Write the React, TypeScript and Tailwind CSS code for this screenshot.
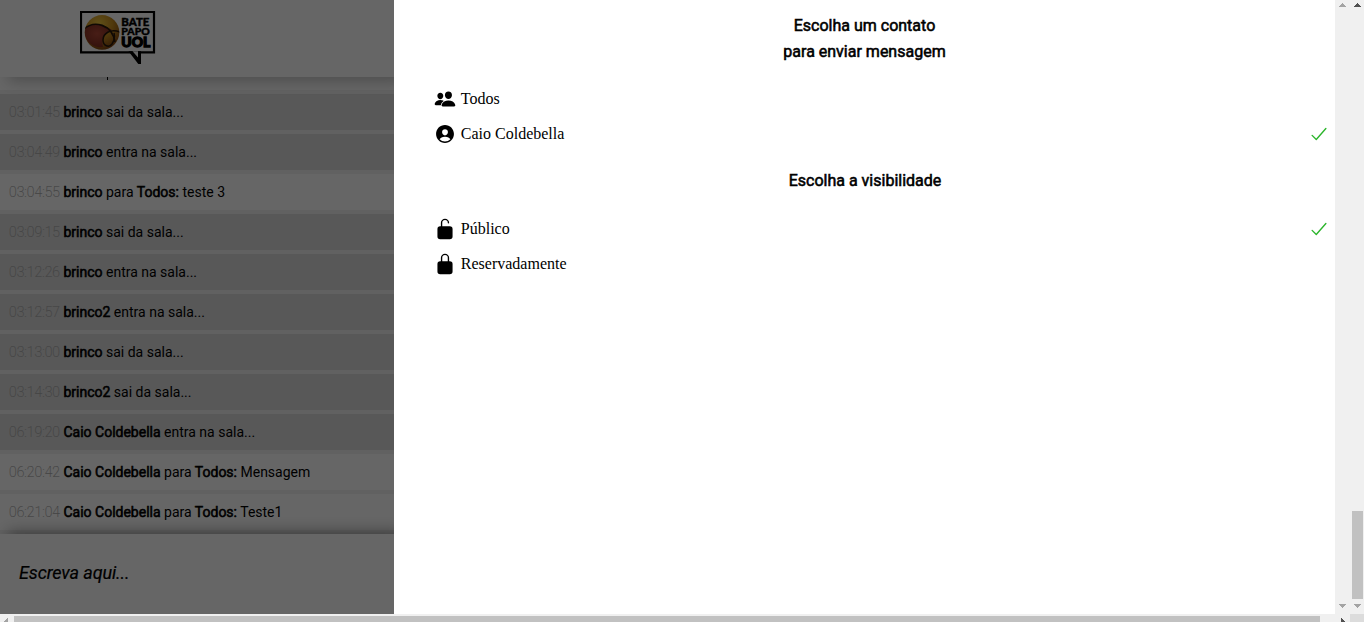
import {
  IoCheckmarkOutline,
  IoLockClosed,
  IoLockOpen,
  IoPeople,
  IoPersonCircle,
} from "react-icons/io5";
import type { ReactNode } from "react";

type Message = { time: string; from: string; to?: string; text: string };

const messages: Message[] = [
  { time: "03:01:45", from: "brinco", text: "sai da sala..." },
  { time: "03:04:49", from: "brinco", text: "entra na sala..." },
  { time: "03:04:55", from: "brinco", to: "Todos", text: "teste 3" },
  { time: "03:09:15", from: "brinco", text: "sai da sala..." },
  { time: "03:12:26", from: "brinco", text: "entra na sala..." },
  { time: "03:12:57", from: "brinco2", text: "entra na sala..." },
  { time: "03:13:00", from: "brinco", text: "sai da sala..." },
  { time: "03:14:30", from: "brinco2", text: "sai da sala..." },
  { time: "06:19:20", from: "Caio Coldebella", text: "entra na sala..." },
  { time: "06:20:42", from: "Caio Coldebella", to: "Todos", text: "Mensagem" },
  { time: "06:21:04", from: "Caio Coldebella", to: "Todos", text: "Teste1" },
];

function Strong({ children }: { children: ReactNode }) {
  return <span className="[-webkit-text-stroke:0.55px_black]">{children}</span>;
}

function MessageRow({ message }: { message: Message }) {
  return (
    <li
      className={
        message.to
          ? "h-9 shrink-0 whitespace-nowrap bg-white pl-[9px] leading-9"
          : "h-9 shrink-0 whitespace-nowrap bg-[#dcdcdc] pl-[9px] leading-9"
      }
    >
      <span className="font-thin text-[#aaaaaa] [-webkit-text-stroke:0.2px_#aaaaaa]">{message.time}</span>{" "}
      <Strong>{message.from}</Strong>{" "}
      {message.to && (
        <>
          para <Strong>{message.to}:</Strong>{" "}
        </>
      )}
      {message.text}
    </li>
  );
}

function Logo() {
  return (
    <svg width="76" height="54" viewBox="0 0 76 54" className="block">
      <defs>
        <radialGradient id="ball" cx="0.4" cy="0.25" r="0.8">
          <stop offset="0" stopColor="#f0c840" />
          <stop offset="0.5" stopColor="#c98f20" />
          <stop offset="1" stopColor="#7a3c0c" />
        </radialGradient>
        <radialGradient id="core" cx="0.45" cy="0.4" r="0.7">
          <stop offset="0" stopColor="#b34a38" />
          <stop offset="1" stopColor="#7a2a1c" />
        </radialGradient>
        <clipPath id="disc">
          <circle cx="22" cy="21.4" r="17.3" />
        </clipPath>
      </defs>
      <path d="M1 1H74V41.3H1Z" fill="white" stroke="black" strokeWidth="2.2" />
      <path d="M48.5 40.3H61V53H58.3Z" fill="black" />
      <path d="M52.5 40.3H58V46.5Z" fill="white" />
      <circle cx="22" cy="21.4" r="17.3" fill="url(#ball)" />
      <g clipPath="url(#disc)">
        <path
          d="M6 16C14 12 25 14 32 19C25 21 21 28 23 36C15 37 7 33 5 24C4.5 21 5 18 6 16Z"
          fill="url(#core)"
        />
        <path d="M4 18C14 9 32 13 35 31" fill="none" stroke="#28180a" strokeWidth="1.6" />
        <path
          d="M40 21C30 17 23 23 23 29C23 35 29 37 32 33C34 30 35 26 34 22"
          fill="none"
          stroke="#28180a"
          strokeWidth="1.5"
        />
      </g>
      <g fontFamily="Lato, sans-serif" fontWeight="900" stroke="black">
        <text x="41.3" y="14.8" fontSize="10.4" strokeWidth="0.4" textLength="28" lengthAdjust="spacingAndGlyphs">BATE</text>
        <text x="41.3" y="24" fontSize="9.4" strokeWidth="0.4" textLength="28.5" lengthAdjust="spacingAndGlyphs">PAPO</text>
        <text x="41.3" y="36.3" fontSize="14" strokeWidth="1.3" textLength="29" lengthAdjust="spacingAndGlyphs">UOL</text>
      </g>
    </svg>
  );
}

function Option({ icon, label, checked }: { icon: ReactNode; label: string; checked?: boolean }) {
  return (
    <li className="flex h-[35px] items-center pl-10 pr-[5px]">
      {icon}
      <span className="ml-[4.8px] flex-1 font-['Liberation_Serif',serif] text-base">{label}</span>
      {checked && <IoCheckmarkOutline size={22} color="#2cb52c" />}
    </li>
  );
}

function Arrow({ className, d }: { className: string; d: string }) {
  return (
    <svg width="7" height="4" viewBox="0 0 7 4" shapeRendering="crispEdges" className={className}>
      <path d={d} />
    </svg>
  );
}

const up = "M3 0H4V1H5V2H6V3H7V4H0V3H1V2H2V1H3Z";
const down = "M0 0H7V1H6V2H5V3H4V4H3V3H2V2H1V1H0Z";

export default function App() {
  return (
    <div className="flex h-[622px] w-[1364px] flex-col overflow-hidden bg-white font-[Roboto,sans-serif] text-black">
      <div className="flex h-[614px]">
        <section className="relative flex w-[394px] flex-col overflow-hidden bg-[#f3f3f3]">
          <header className="z-10 h-[77px] shrink-0 bg-white pl-20 pt-[11px] shadow-[8px_4px_14px_rgba(0,0,0,0.25)]">
            <Logo />
          </header>
          <ul className="flex h-[457px] shrink-0 flex-col gap-1 text-sm">
            {/* Tail of the message scrolled under the header: only its descender is left. */}
            <li className="h-[13px] shrink-0 bg-white pl-[107px]">
              <div className="h-[3px] w-px bg-black" />
            </li>
            {messages.map((m) => (
              <MessageRow key={m.time} message={m} />
            ))}
          </ul>
          <footer className="z-10 h-20 shrink-0 bg-white pl-[19px] text-lg italic leading-[77px] tracking-[-0.12px] shadow-[8px_-2px_14px_rgba(0,0,0,0.4)] [-webkit-text-stroke:0.2px_black]">
            Escreva aqui...
          </footer>
          <div className="absolute inset-0 z-20 bg-black/60" />
        </section>
        <main className="w-[941px] bg-white">
          <h2 className="pt-[13px] text-center text-base leading-[26px]">
            <Strong>
              Escolha um contato
              <br />
              para enviar mensagem
            </Strong>
          </h2>
          <ul className="mt-4">
            <Option icon={<IoPeople size={22} />} label="Todos" />
            <Option icon={<IoPersonCircle size={22} />} label="Caio Coldebella" checked />
          </ul>
          <h2 className="mt-[17px] pl-px text-center text-base leading-[26px]">
            <Strong>Escolha a visibilidade</Strong>
          </h2>
          <ul className="mt-[17px]">
            <Option icon={<IoLockOpen size={22} />} label="Público" checked />
            <Option icon={<IoLockClosed size={22} />} label="Reservadamente" />
          </ul>
        </main>
        <div className="flex w-[15px] flex-col items-center justify-between bg-[#f0f0f0] pb-1.5 pt-[3px]">
          <Arrow d={up} className="fill-[#a3a3a3]" />
          <Arrow d={down} className="fill-[#a3a3a3]" />
        </div>
        <div className="flex w-[14px] flex-col items-center bg-[#f0f0f0] pl-px pt-[3px]">
          <Arrow d={up} className="fill-[#505050]" />
          <div className="mt-[504px] h-[88px] w-[11px] bg-[#c1c1c1]" />
          <Arrow d={down} className="mt-[5px] fill-[#a3a3a3]" />
        </div>
      </div>
      <div className="flex h-2 bg-[#f0f0f0]">
        <svg width="14" height="8" viewBox="0 0 14 8" shapeRendering="crispEdges">
          <path d="M8 4V8H4V7H5V6H6V5H7V4Z" fill="#a3a3a3" />
        </svg>
        <div className="mt-0.5 h-1.5 w-[1306px] bg-[#c1c1c1]" />
        <svg width="30" height="8" viewBox="0 0 30 8" shapeRendering="crispEdges">
          <path d="M21 4H22V5H23V6H24V7H25V8H21Z" fill="#505050" />
        </svg>
        <div className="h-2 w-[14px] bg-[#dcdcdc]" />
      </div>
    </div>
  );
}
